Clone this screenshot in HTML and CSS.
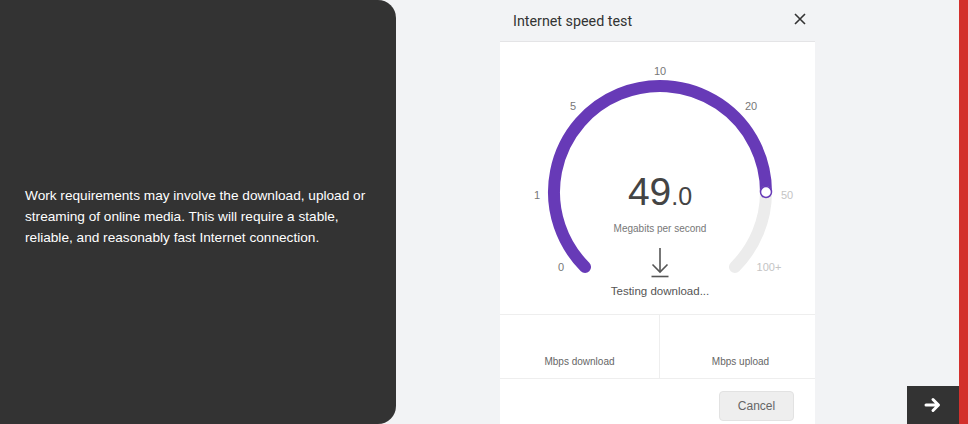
FILE: index.html
```html
<!DOCTYPE html>
<html lang="en">
<head>
<meta charset="utf-8">
<title>Internet speed test</title>
<link rel="stylesheet" href="styles.css">
</head>
<body>
<div class="stage">
  <section class="panel">
    <p class="panel-text">Work requirements may involve the download, upload or streaming of online media. This will require a stable, reliable, and reasonably fast Internet connection.</p>
  </section>
  <main class="main">
    <div class="dialog">
      <header class="dialog-head">
        <h1 class="dialog-title">Internet speed test</h1>
        <button class="close" aria-label="Close">
          <svg width="12" height="12" viewBox="0 0 12 12"><path d="M1 1 L11 11 M11 1 L1 11" stroke="#333" stroke-width="1.6" fill="none"/></svg>
        </button>
      </header>
      <div class="dialog-body">
        <svg class="gauge" width="315" height="272" viewBox="0 0 315 272">
          <path d="M 85.05 224.95 A 106 106 0 1 1 266 150" stroke="#673ab7" stroke-width="12" fill="none" stroke-linecap="round"/>
          <path d="M 266 150 A 106 106 0 0 1 234.95 224.95" stroke="#ececec" stroke-width="12" fill="none" stroke-linecap="round"/>
          <circle cx="266" cy="150" r="5.5" fill="#fff" stroke="#673ab7" stroke-width="1.5"/>
          <text class="tick" x="61" y="225">0</text>
          <text class="tick" x="37" y="153">1</text>
          <text class="tick" x="73" y="64">5</text>
          <text class="tick" x="160" y="29">10</text>
          <text class="tick" x="251" y="64">20</text>
          <text class="tick tick-off" x="287" y="153">50</text>
          <text class="tick tick-off" x="269" y="225">100+</text>
          <text class="speed" x="160" y="163"><tspan class="speed-int">49</tspan><tspan class="speed-dec">.0</tspan></text>
          <text class="unit" x="160" y="190">Megabits per second</text>
          <g stroke="#555" stroke-width="1.6" fill="none">
            <path d="M160 206 V230"/>
            <path d="M152.5 222.5 L160 230 L167.5 222.5"/>
            <path d="M151.5 234.5 H168.5"/>
          </g>
          <text class="status" x="160" y="253">Testing download...</text>
        </svg>
        <div class="stats">
          <div class="stat stat-down"><span class="stat-label">Mbps download</span></div>
          <div class="stat stat-up"><span class="stat-label">Mbps upload</span></div>
        </div>
        <div class="dialog-foot">
          <button class="cancel">Cancel</button>
        </div>
      </div>
    </div>
  </main>
  <div class="redbar"></div>
  <button class="next" aria-label="Next">
    <svg width="18" height="16" viewBox="0 0 18 16"><path d="M2 8 H14 M9 2.5 L14.5 8 L9 13.5" stroke="#fff" stroke-width="3" fill="none" stroke-linecap="round" stroke-linejoin="round"/></svg>
  </button>
</div>
</body>
</html>
```

FILE: styles.css
```css
* { box-sizing: border-box; }
html, body { margin: 0; padding: 0; }
body {
  width: 968px;
  height: 424px;
  overflow: hidden;
  background: #f2f3f5;
  font-family: "Liberation Sans", Arial, sans-serif;
}
.stage {
  position: relative;
  display: flex;
  height: 424px;
}
.panel {
  width: 396px;
  flex: none;
  background: #333333;
  border-radius: 0 18px 18px 0;
  display: flex;
  align-items: center;
  padding: 8px 22px 0 25px;
}
.panel-text {
  margin: 0;
  color: #ffffff;
  font-size: 13.65px;
  line-height: 21px;
}
.main {
  flex: 1;
  display: flex;
}
.dialog {
  margin-left: 104px;
  width: 315px;
  display: flex;
  flex-direction: column;
}
.dialog-head {
  height: 42px;
  border-bottom: 1px solid #e4e4e6;
  display: flex;
  align-items: center;
  justify-content: space-between;
  padding: 1px 9px 0 13px;
}
.dialog-title {
  margin: 0;
  font-family: Roboto, "Liberation Sans", sans-serif;
  font-weight: 400;
  font-size: 14.3px;
  color: #333;
}
.close {
  border: 0;
  background: none;
  padding: 0;
  width: 12px;
  height: 12px;
  margin-top: -5px;
  display: flex;
}
.dialog-body {
  flex: 1;
  background: #ffffff;
  display: flex;
  flex-direction: column;
}
.gauge { display: block; }
.tick {
  font-family: "Liberation Sans", Arial, sans-serif;
  font-size: 11px;
  fill: #777;
  text-anchor: middle;
  dominant-baseline: central;
}
.tick-off { fill: #c4c4c4; }
.speed {
  font-family: "Liberation Sans", Arial, sans-serif;
  fill: #444;
  text-anchor: middle;
}
.speed-int { font-size: 39px; }
.speed-dec { font-size: 25px; }
.unit {
  font-family: "Liberation Sans", Arial, sans-serif;
  font-size: 10px;
  fill: #777;
  text-anchor: middle;
}
.status {
  font-family: "Liberation Sans", Arial, sans-serif;
  font-size: 11.5px;
  fill: #555;
  text-anchor: middle;
}
.stats {
  display: flex;
  height: 65px;
  border-top: 1px solid #eeeeee;
  border-bottom: 1px solid #eeeeee;
}
.stat {
  display: flex;
  align-items: flex-end;
  justify-content: center;
  padding-bottom: 11px;
}
.stat-down { width: 160px; border-right: 1px solid #eeeeee; }
.stat-up { flex: 1; padding-left: 6px; }
.stat-label {
  font-size: 10px;
  color: #666;
}
.dialog-foot {
  display: flex;
  justify-content: flex-end;
  padding: 12px 21px 0 0;
}
.cancel {
  width: 75px;
  height: 30px;
  background: #eeeeee;
  border: 1px solid #e2e2e2;
  border-radius: 4px;
  font-family: "Liberation Sans", Arial, sans-serif;
  font-size: 12px;
  color: #666;
  padding: 0;
}
.redbar {
  width: 9px;
  flex: none;
  background: #d3302c;
}
.next {
  position: absolute;
  right: 9px;
  bottom: 0;
  width: 52px;
  height: 38px;
  border: 0;
  padding: 0;
  background: #333333;
  display: flex;
  align-items: center;
  justify-content: center;
}
```
